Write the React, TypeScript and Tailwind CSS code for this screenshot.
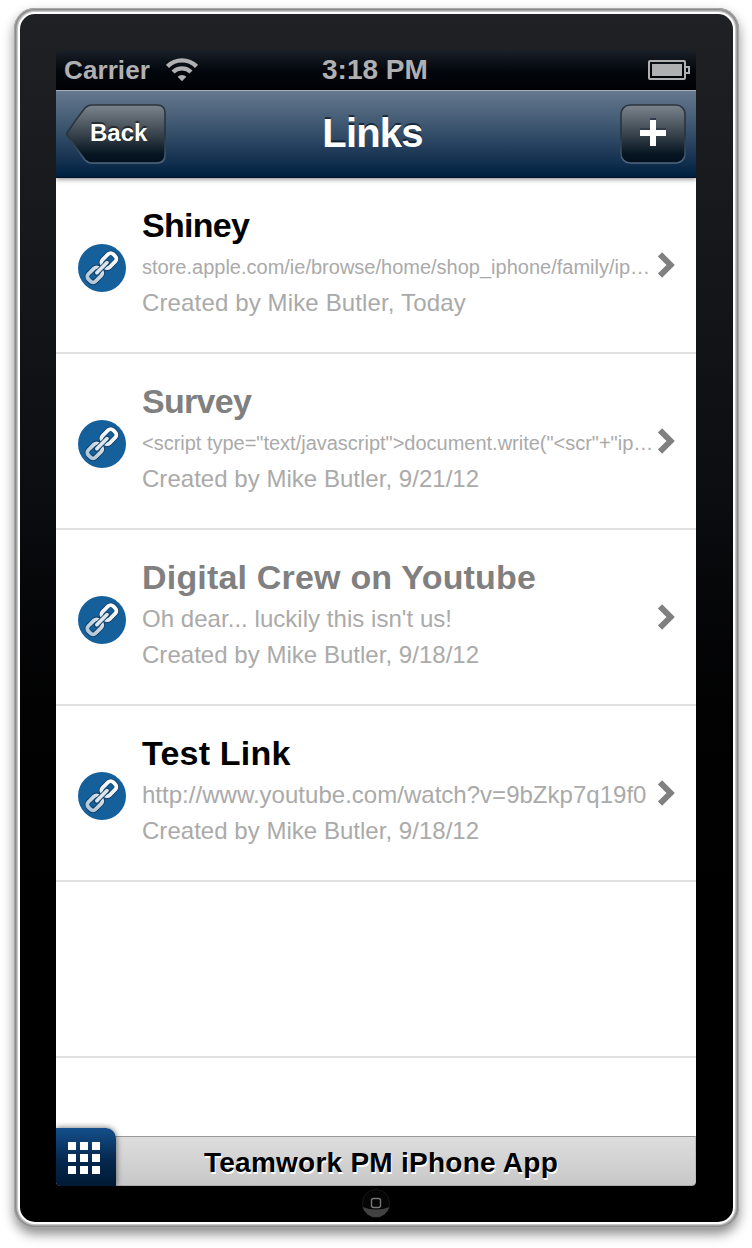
import React from "react";

type LinkItem = {
  title: string;
  detail: string;
  meta: string;
  titleClass: string;
  detailClass: string;
  metaClass: string;
};

const links: LinkItem[] = [
  {
    title: "Shiney",
    detail: "store.apple.com/ie/browse/home/shop_iphone/family/ip…",
    meta: "Created by Mike Butler, Today",
    titleClass: "text-black tracking-[-0.7px]",
    detailClass: "text-[20px]",
    metaClass: "tracking-[0.14px]",
  },
  {
    title: "Survey",
    detail: '<script type="text/javascript">document.write("<scr"+"ip…',
    meta: "Created by Mike Butler, 9/21/12",
    titleClass: "text-[#808080] tracking-[-0.7px]",
    detailClass: "text-[20px] tracking-[-0.01px]",
    metaClass: "tracking-[0.03px]",
  },
  {
    title: "Digital Crew on Youtube",
    detail: "Oh dear... luckily this isn't us!",
    meta: "Created by Mike Butler, 9/18/12",
    titleClass: "text-[#808080] tracking-[0.19px]",
    detailClass: "text-[24px] tracking-[0.04px]",
    metaClass: "tracking-[0.03px]",
  },
  {
    title: "Test Link",
    detail: "http://www.youtube.com/watch?v=9bZkp7q19f0",
    meta: "Created by Mike Butler, 9/18/12",
    titleClass: "text-black tracking-[0.2px]",
    detailClass: "text-[24px] tracking-[0.02px]",
    metaClass: "tracking-[0.03px]",
  },
];

const chainCenters = [
  { x: 30.9, y: 16.6 },
  { x: 16.8, y: 30.8 },
];

function ChainIcon() {
  return (
    <svg width="48" height="48" viewBox="0 0 48 48" className="block shrink-0">
      <defs>
        <linearGradient id="chain" gradientUnits="userSpaceOnUse" x1="8" y1="0" x2="-8" y2="0">
          <stop offset="0" stopColor="#ffffff" />
          <stop offset="1" stopColor="#e2eaf1" />
        </linearGradient>
        <linearGradient id="chainLow" gradientUnits="userSpaceOnUse" x1="8" y1="0" x2="-8" y2="0">
          <stop offset="0" stopColor="#d3dfe9" />
          <stop offset="1" stopColor="#b3c7d9" />
        </linearGradient>
      </defs>
      <circle cx="24" cy="24" r="24" fill="#155f9b" />
      {chainCenters.map((c, i) => (
        <g key={c.x} transform={`translate(${c.x} ${c.y}) rotate(-45)`} fill="none">
          <rect x="-7.6" y="-5.1" width="15.2" height="10.2" rx="3.6" stroke="#123c62" strokeWidth="5.4" />
          <rect
            x="-7.6"
            y="-5.1"
            width="15.2"
            height="10.2"
            rx="3.6"
            stroke={i === 0 ? "url(#chain)" : "url(#chainLow)"}
            strokeWidth="3.8"
          />
        </g>
      ))}
      <path d="M18.8 28.8 L29 18.6" stroke="#123c62" strokeWidth="5.4" strokeLinecap="round" />
      <path d="M18.8 28.8 L29 18.6" stroke="#dbe5ee" strokeWidth="3.6" strokeLinecap="round" />
    </svg>
  );
}

function LinkRow({ item }: { item: LinkItem }) {
  return (
    <li className="flex h-[176px] border-b-2 border-[#e0e0e0] pl-[22px]">
      <div className="mt-[66px] h-12 w-12 shrink-0">
        <ChainIcon />
      </div>
      <div className="ml-4 mt-[26px] w-[512px] whitespace-nowrap">
        <h2 className={`h-[42px] text-[34px] leading-[42px] font-bold ${item.titleClass}`}>{item.title}</h2>
        <p className={`h-[42px] leading-[42px] text-[#aaaaaa] ${item.detailClass}`}>{item.detail}</p>
        <p className={`h-[30px] text-[24px] leading-[30px] text-[#aaaaaa] ${item.metaClass}`}>{item.meta}</p>
      </div>
      <svg width="20" height="28" viewBox="0 0 20 28" className="ml-[3px] mt-[73px]">
        <path d="M3 3.4 L13.6 14 L3 24.6" fill="none" stroke="#808080" strokeWidth="6" />
      </svg>
    </li>
  );
}

function StatusBar() {
  return (
    <div className="flex h-10 items-center rounded-t-[4px] bg-linear-to-b from-[#1b2028] via-[#02050a] via-60% to-[#000307] pl-2 pr-[6px] font-bold text-[#b0b0b2]">
      <span className="w-[102px] text-[26px] leading-10 tracking-[0.1px]">Carrier</span>
      <svg width="32" height="24" viewBox="0 0 32 24" fill="none" stroke="#b0b0b2">
        <path d="M1.5 8.4 A20.5 20.5 0 0 1 30.5 8.4" strokeWidth="4.4" />
        <path d="M7 14 A13 13 0 0 1 25 14" strokeWidth="4.4" />
        <path d="M16 23.2 L11.6 18.7 A6.3 6.3 0 0 1 20.4 18.7 Z" fill="#b0b0b2" stroke="none" />
      </svg>
      <span className="ml-[124px] text-[28px] leading-10">3:18 PM</span>
      <svg width="42" height="20" viewBox="0 0 42 20" className="ml-auto">
        <rect x="1" y="1" width="36" height="18" rx="1" fill="none" stroke="#b0b0b2" strokeWidth="2" />
        <rect x="4" y="4" width="30" height="12" fill="#b0b0b2" />
        <path d="M38 7 H41 V13 H38" fill="none" stroke="#b0b0b2" strokeWidth="2" />
      </svg>
    </div>
  );
}

function ButtonPaint() {
  return (
    <defs>
      <linearGradient id="btn" x1="0" y1="0" x2="0" y2="1">
        <stop offset="0" stopColor="#7c858d" />
        <stop offset="0.5" stopColor="#39434d" />
        <stop offset="0.85" stopColor="#061521" />
        <stop offset="1" stopColor="#02101d" />
      </linearGradient>
      <linearGradient id="rim" x1="0" y1="0" x2="0" y2="1">
        <stop offset="0" stopColor="#2b333b" />
        <stop offset="0.5" stopColor="#26333f" />
        <stop offset="0.85" stopColor="#3c5167" />
        <stop offset="1" stopColor="#52677d" />
      </linearGradient>
    </defs>
  );
}

function NavBar() {
  return (
    <header className="relative z-10 flex h-22 items-start justify-between border-t border-b border-t-[#a4b0bc] border-b-[#001126] bg-linear-to-b from-[#66798e] via-[#344e69] via-50% to-[#001f40] px-[10px] pt-[13px] font-bold text-white shadow-[0_1px_5px_rgba(0,0,0,0.5)]">
      <button className="grid h-15 w-[100px] text-left">
        <svg width="100" height="60" viewBox="0 0 100 60" className="col-start-1 row-start-1">
          <ButtonPaint />
          <path
            d="M26 1 H91 Q99 1 99 9 V51 Q99 59 91 59 H26 Q22 59 19 56 Q10 44 1 31 Q0.4 30 1 29 Q10 15 19 4 Q22 1 26 1 Z"
            fill="url(#btn)"
            stroke="url(#rim)"
            strokeWidth="1.6"
          />
        </svg>
        <span className="col-start-1 row-start-1 pl-6 text-[24px] leading-[58px] [text-shadow:0_-2px_1px_rgba(0,0,0,0.55)]">
          Back
        </span>
      </button>
      <h1 className="-ml-[41px] text-[40px] leading-[58px] tracking-[-0.8px] [text-shadow:0_-2px_0_rgba(0,10,25,0.6)]">
        Links
      </h1>
      <button className="h-15 w-[66px]">
        <svg width="66" height="60" viewBox="0 0 66 60">
          <ButtonPaint />
          <rect x="1" y="1" width="64" height="58" rx="9" fill="url(#btn)" stroke="url(#rim)" strokeWidth="1.6" />
          <path d="M30 14 h6 v10 h10 v6 H20 v-6 h10 Z" fill="#303b4c" />
          <path d="M30 16 h6 v10 h10 v6 h-10 v10 h-6 v-10 H20 v-6 h10 Z" fill="#fff" />
        </svg>
      </button>
    </header>
  );
}

function Footer() {
  return (
    <footer className="relative h-[50px] rounded-b-[4px] border border-l-0 border-[#999999] border-r-[#bcbcbc] border-b-[#aaaaaa] bg-linear-to-b from-[#dddddd] to-[#c8c8c8]">
      <p className="pl-[11px] text-center text-[28px] leading-[52px] font-bold tracking-[0.25px] text-black [text-shadow:1px_2px_0_#fff]">
        Teamwork PM iPhone App
      </p>
      <button className="absolute -top-[9px] left-0 flex h-[58px] w-15 items-center justify-center rounded-tr-[10px] rounded-bl-[4px] bg-linear-to-b from-[#15508c] via-[#06284f] via-55% to-[#001a35] pr-1 pt-[2px] shadow-[0_0_6px_rgba(0,0,0,0.6)]">
        <span className="grid grid-cols-3 gap-1">
          {Array.from({ length: 9 }, (_, i) => (
            <i key={i} className="h-2 w-2 bg-white" />
          ))}
        </span>
      </button>
    </footer>
  );
}

export default function App() {
  return (
    <div className="h-[1248px] w-[752px] overflow-hidden bg-white pt-2 pl-[14px] [font-family:'Liberation_Sans',Arial,sans-serif]">
      <div className="h-[1220px] w-[725px] rounded-[21px] bg-white p-[6px] shadow-[0_6px_12px_rgba(0,0,0,0.45),inset_0_0_0_1px_#a8a8a8,inset_0_0_0_2px_#8a8a8a,inset_0_0_0_3px_#a6a6a6,inset_0_0_0_4px_#c8c8c8]">
        <div className="h-full rounded-[15px] bg-linear-to-b from-[#202125] via-[#0c0d10] via-40% to-black to-80% pt-9 pl-9">
          <main className="flex h-[1136px] w-[640px] flex-col overflow-hidden rounded-[4px]">
            <StatusBar />
            <NavBar />
            <ul className="grow bg-white">
              {links.map((item) => (
                <LinkRow key={item.title} item={item} />
              ))}
              <li className="h-[176px] border-b-2 border-[#e0e0e0]" />
            </ul>
            <Footer />
          </main>
          <svg width="30" height="30" viewBox="0 0 30 30" className="mt-[2px] ml-[305px]">
            <circle cx="15" cy="15" r="13.5" fill="#050505" stroke="#171717" />
            <path d="M1.5 19 Q15 24 28.5 19 A14 14 0 0 1 1.5 19 Z" fill="#414141" />
            <rect x="10.5" y="10.5" width="9" height="9" rx="2" fill="none" stroke="#777777" strokeWidth="1.4" />
          </svg>
        </div>
      </div>
    </div>
  );
}
